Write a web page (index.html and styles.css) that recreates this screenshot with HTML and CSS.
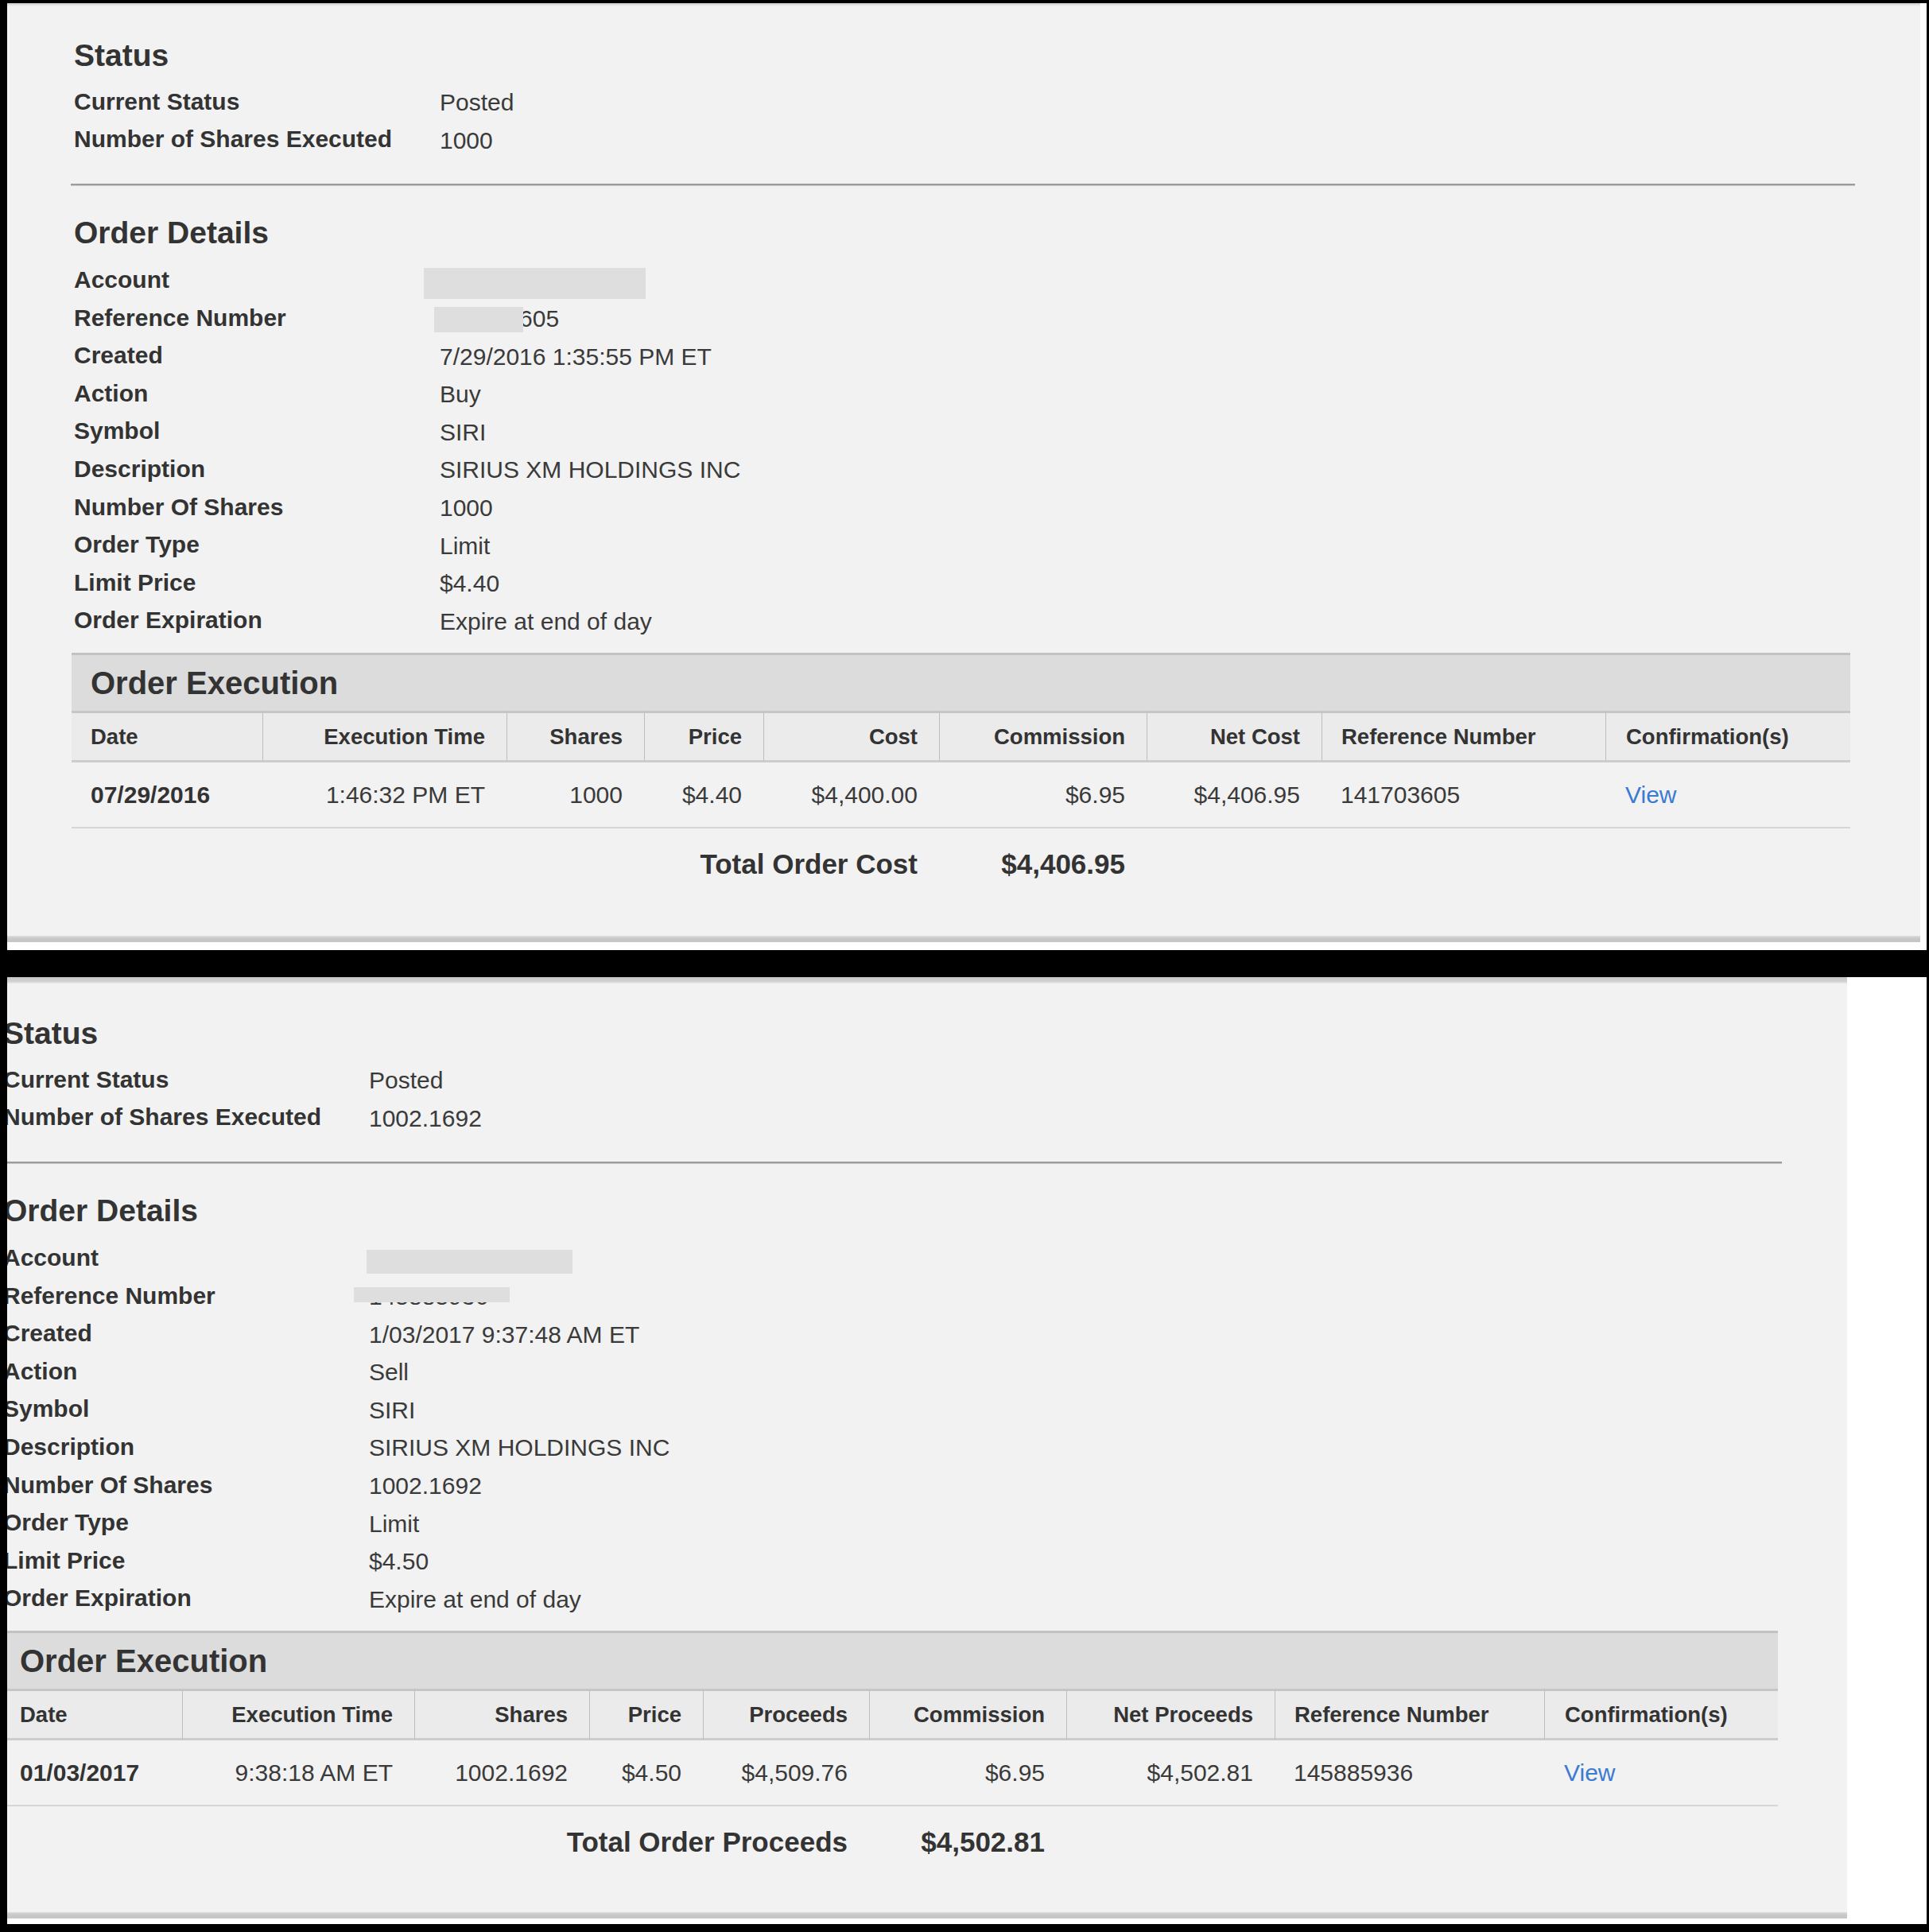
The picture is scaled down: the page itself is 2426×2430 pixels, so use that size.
FILE: index.html
```html
<!DOCTYPE html>
<html>
<head>
<meta charset="utf-8">
<title>Order Status</title>
<link rel="stylesheet" href="styles.css">
</head>
<body>
<div class="frame frame-top">
  <div class="page page-top">
    <div class="page-head"></div>
    <div class="content">
      <h2 class="sec-title">Status</h2>
      <dl class="kv">
        <dt>Current Status</dt><dd>Posted</dd>
        <dt>Number of Shares Executed</dt><dd>1000</dd>
      </dl>
      <hr class="divider">
      <h2 class="sec-title sec-second">Order Details</h2>
      <dl class="kv kv-details">
        <dt>Account</dt><dd class="redact-cell"><span class="redact r-acct-1"></span></dd>
        <dt>Reference Number</dt><dd class="redact-cell">141703605<span class="redact r-ref-1"></span></dd>
        <dt>Created</dt><dd>7/29/2016 1:35:55 PM ET</dd>
        <dt>Action</dt><dd>Buy</dd>
        <dt>Symbol</dt><dd>SIRI</dd>
        <dt>Description</dt><dd>SIRIUS XM HOLDINGS INC</dd>
        <dt>Number Of Shares</dt><dd>1000</dd>
        <dt>Order Type</dt><dd>Limit</dd>
        <dt>Limit Price</dt><dd>$4.40</dd>
        <dt>Order Expiration</dt><dd>Expire at end of day</dd>
      </dl>
      <div class="exec exec-1">
        <div class="exec-title">Order Execution</div>
        <table class="exec-table t-buy">
          <colgroup><col><col><col><col><col><col><col><col><col></colgroup>
          <thead>
            <tr>
              <th class="l">Date</th>
              <th>Execution Time</th>
              <th>Shares</th>
              <th>Price</th>
              <th>Cost</th>
              <th>Commission</th>
              <th>Net Cost</th>
              <th class="l">Reference Number</th>
              <th class="l">Confirmation(s)</th>
            </tr>
          </thead>
          <tbody>
            <tr class="data">
              <td class="l b">07/29/2016</td>
              <td>1:46:32 PM ET</td>
              <td>1000</td>
              <td>$4.40</td>
              <td>$4,400.00</td>
              <td>$6.95</td>
              <td>$4,406.95</td>
              <td class="l">141703605</td>
              <td class="l"><a class="link" href="#">View</a></td>
            </tr>
            <tr class="total">
              <td colspan="5">Total Order Cost</td>
              <td>$4,406.95</td>
              <td colspan="3"></td>
            </tr>
          </tbody>
        </table>
      </div>
    </div>
    <div class="page-foot"></div>
  </div>
</div>

<div class="frame frame-bottom">
  <div class="page page-bottom">
    <div class="page-head page-head-dark"></div>
    <div class="content content-shifted">
      <h2 class="sec-title">Status</h2>
      <dl class="kv kv-narrow">
        <dt>Current Status</dt><dd>Posted</dd>
        <dt>Number of Shares Executed</dt><dd>1002.1692</dd>
      </dl>
      <hr class="divider divider-2">
      <h2 class="sec-title sec-second">Order Details</h2>
      <dl class="kv kv-narrow kv-details">
        <dt>Account</dt><dd class="redact-cell"><span class="redact r-acct-2"></span></dd>
        <dt>Reference Number</dt><dd class="redact-cell">145885936<span class="redact r-ref-2"></span></dd>
        <dt>Created</dt><dd>1/03/2017 9:37:48 AM ET</dd>
        <dt>Action</dt><dd>Sell</dd>
        <dt>Symbol</dt><dd>SIRI</dd>
        <dt>Description</dt><dd>SIRIUS XM HOLDINGS INC</dd>
        <dt>Number Of Shares</dt><dd>1002.1692</dd>
        <dt>Order Type</dt><dd>Limit</dd>
        <dt>Limit Price</dt><dd>$4.50</dd>
        <dt>Order Expiration</dt><dd>Expire at end of day</dd>
      </dl>
      <div class="exec exec-2">
        <div class="exec-title">Order Execution</div>
        <table class="exec-table t-sell">
          <colgroup><col><col><col><col><col><col><col><col><col></colgroup>
          <thead>
            <tr>
              <th class="l">Date</th>
              <th>Execution Time</th>
              <th>Shares</th>
              <th>Price</th>
              <th>Proceeds</th>
              <th>Commission</th>
              <th>Net Proceeds</th>
              <th class="l">Reference Number</th>
              <th class="l">Confirmation(s)</th>
            </tr>
          </thead>
          <tbody>
            <tr class="data">
              <td class="l b">01/03/2017</td>
              <td>9:38:18 AM ET</td>
              <td>1002.1692</td>
              <td>$4.50</td>
              <td>$4,509.76</td>
              <td>$6.95</td>
              <td>$4,502.81</td>
              <td class="l">145885936</td>
              <td class="l"><a class="link" href="#">View</a></td>
            </tr>
            <tr class="total">
              <td colspan="5">Total Order Proceeds</td>
              <td>$4,502.81</td>
              <td colspan="3"></td>
            </tr>
          </tbody>
        </table>
      </div>
    </div>
    <div class="page-foot"></div>
  </div>
</div>
</body>
</html>
```

FILE: styles.css
```css
* { box-sizing: border-box; }

html, body {
  margin: 0;
  padding: 0;
}

body {
  background: #000;
  width: 2426px;
  height: 2430px;
  overflow: hidden;
  font-family: "Liberation Sans", Arial, Helvetica, sans-serif;
  color: #333;
}

.frame {
  background: #fff;
  margin-left: 9px;
  width: 2417px;
  border-right: 3px solid #000;
}

.frame-top {
  margin-top: 4px;
  height: 1191px;
}

.frame-bottom {
  margin-top: 34px;
  height: 1191px;
}

.page {
  background: #f2f2f2;
  display: flex;
  flex-direction: column;
  overflow: hidden;
}

.page-top {
  width: 2406px;
  height: 1181px;
}

.page-bottom {
  width: 2314px;
  height: 1184px;
}

.page-head {
  height: 4px;
  flex: none;
  background: linear-gradient(#cfcfcf, #f2f2f2);
}

.page-head-dark {
  height: 8px;
  background: linear-gradient(#c6c6c6, #d2d2d2 70%, #ececec);
}

.page-foot {
  margin-top: auto;
  flex: none;
  height: 8px;
  background: linear-gradient(#dedede, #c8c8c8 40%, #c6c6c6);
}

.content {
  padding: 38px 0 0 84px;
  flex: none;
}

.content-shifted {
  padding: 39px 0 0 0;
  margin-left: -5px;
}

.sec-title {
  margin: 0;
  font-size: 39px;
  line-height: 48px;
  font-weight: bold;
  color: #333;
}

.sec-second {
  margin-top: 36px;
}

.kv {
  display: grid;
  grid-template-columns: 460px auto;
  grid-auto-rows: 47.6px;
  align-items: center;
  margin: 10px 0 0;
  font-size: 30px;
}

.kv-details {
  margin-top: 11px;
}

.kv dt {
  font-weight: bold;
  color: #333;
}

.kv dd {
  margin: 0;
  align-self: stretch;
  display: flex;
  align-items: center;
  padding-top: 3px;
  color: #3a3a3a;
}

.redact-cell {
  position: relative;
}

.redact {
  position: absolute;
  background: #dedede;
}

.r-acct-1 { left: -20px; top: 9px; width: 279px; height: 39px; }
.r-ref-1 { left: -7px; top: 10px; width: 112px; height: 32px; }
.r-acct-2 { left: -3px; top: 14px; width: 259px; height: 30px; }
.r-ref-2 { left: -19px; top: 13px; width: 196px; height: 19px; }

.divider {
  margin: 32px 0 0 -4px;
  width: 2244px;
  height: 2px;
  border: 0;
  background: #9c9c9c;
  box-shadow: 0 1px 0 #c9c9c9;
}

.divider-2 {
  width: 2241px;
}

.exec {
  margin: 17px 0 0 -3px;
  border-top: 3px solid #c2c2c2;
}

.exec-1 { width: 2237px; }
.exec-2 { width: 2235px; }

.exec-title {
  background: #dcdcdc;
  height: 70px;
  line-height: 70px;
  padding-left: 24px;
  font-size: 40px;
  font-weight: bold;
  color: #333;
}

.exec-table {
  width: 100%;
  table-layout: fixed;
  border-collapse: separate;
  border-spacing: 0;
}

.t-buy col:nth-child(1) { width: 240px; }
.t-buy col:nth-child(2) { width: 307px; }
.t-buy col:nth-child(3) { width: 173px; }
.t-buy col:nth-child(4) { width: 150px; }
.t-buy col:nth-child(5) { width: 221px; }
.t-buy col:nth-child(6) { width: 261px; }
.t-buy col:nth-child(7) { width: 220px; }
.t-buy col:nth-child(8) { width: 357px; }
.t-buy col:nth-child(9) { width: 308px; }

.t-sell col:nth-child(1) { width: 228px; }
.t-sell col:nth-child(2) { width: 292px; }
.t-sell col:nth-child(3) { width: 220px; }
.t-sell col:nth-child(4) { width: 143px; }
.t-sell col:nth-child(5) { width: 209px; }
.t-sell col:nth-child(6) { width: 248px; }
.t-sell col:nth-child(7) { width: 262px; }
.t-sell col:nth-child(8) { width: 339px; }
.t-sell col:nth-child(9) { width: 294px; }

.exec-table th {
  background: #ebebeb;
  border-top: 3px solid #c6c6c6;
  border-bottom: 3px solid #cdcdcd;
  line-height: 59px;
  padding: 0 27px 0 24px;
  font-size: 27.5px;
  font-weight: bold;
  color: #333;
  text-align: right;
  white-space: nowrap;
}

.exec-table th + th {
  border-left: 1px solid #bdbdbd;
}

.exec-table td {
  padding: 0 27px 0 24px;
  font-size: 30px;
  color: #3a3a3a;
  text-align: right;
  white-space: nowrap;
}

.exec-table .l {
  text-align: left;
}

.exec-table .b {
  font-weight: bold;
  color: #333;
}

.exec-table th.l + th.l,
.exec-table td.l + td.l {
  padding-left: 25px;
}

.data td {
  line-height: 81px;
  border-bottom: 2px solid #d6d6d6;
}

.total td {
  line-height: 90px;
  font-size: 35px;
  font-weight: bold;
  color: #333;
}

.link {
  color: #3b7bd0;
  text-decoration: none;
}
```
